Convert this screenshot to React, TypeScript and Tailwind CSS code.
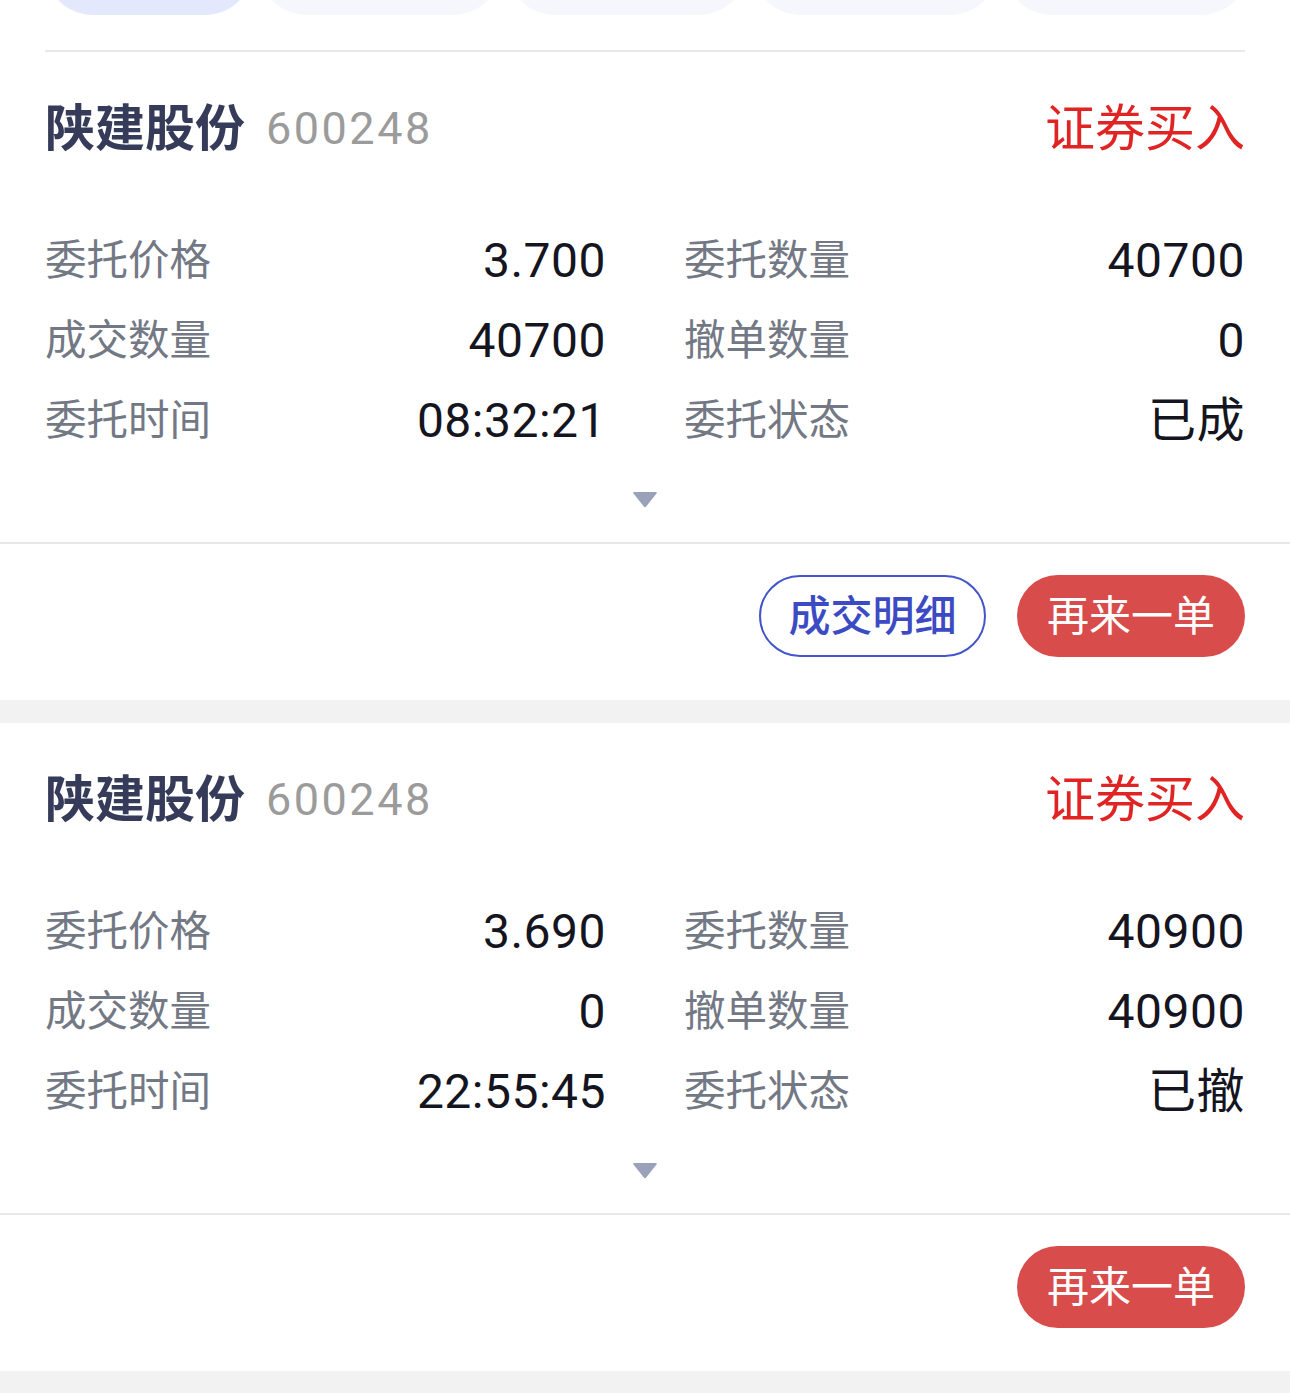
import React from "react";

interface IOrder {
  name: string;
  code: string;
  side: string;
  price: string;
  amount: string;
  filled: string;
  canceled: string;
  time: string;
  status: string;
  showDetail: boolean;
}

const orders: IOrder[] = [
  {
    name: "陕建股份",
    code: "600248",
    side: "证券买入",
    price: "3.700",
    amount: "40700",
    filled: "40700",
    canceled: "0",
    time: "08:32:21",
    status: "已成",
    showDetail: true,
  },
  {
    name: "陕建股份",
    code: "600248",
    side: "证券买入",
    price: "3.690",
    amount: "40900",
    filled: "0",
    canceled: "40900",
    time: "22:55:45",
    status: "已撤",
    showDetail: false,
  },
];

const Cell = ({ label, value }: { label: string; value: string }) => {
  return (
    <div className="flex h-[80px] items-center justify-between">
      <span className="text-[41.5px] text-[#737885]">{label}</span>
      <span className="text-[48px] tracking-[0.5px] text-[#15151f]">
        {value}
      </span>
    </div>
  );
};

const OrderCard = ({ order }: { order: IOrder }) => {
  return (
    <div className="bg-white">
      <div className="px-[45px]">
        <div className="flex h-[154px] items-center justify-between">
          <div className="flex items-center">
            <h1 className="text-[50px] font-semibold text-[#353b58]">
              {order.name}
            </h1>
            <span className="ml-[21px] text-[45px] tracking-[2.5px] text-[#9b9b9b]">
              {order.code}
            </span>
          </div>
          <span className="text-[50px] text-[#e02323]">{order.side}</span>
        </div>
        <div className="grid grid-cols-2 gap-x-[78px] pt-[15px]">
          <Cell label="委托价格" value={order.price} />
          <Cell label="委托数量" value={order.amount} />
          <Cell label="成交数量" value={order.filled} />
          <Cell label="撤单数量" value={order.canceled} />
          <Cell label="委托时间" value={order.time} />
          <Cell label="委托状态" value={order.status} />
        </div>
        <div className="flex h-[81px] justify-center pt-[30px]">
          <svg width="26" height="17" viewBox="0 0 26 17">
            <path
              d="M2 1 H24 Q25.5 1 24.5 2.5 L14.2 15.5 Q13 17 11.8 15.5 L1.5 2.5 Q0.5 1 2 1 Z"
              fill="#9aa2b9"
            />
          </svg>
        </div>
      </div>
      <div className="h-[2px] bg-[#e8e8e8]"></div>
      <div className="flex justify-end gap-[31px] px-[45px] pt-[31px] pb-[43px]">
        {order.showDetail && (
          <button className="flex h-[82px] w-[227px] items-center justify-center rounded-full border-2 border-[#4455c9] text-[42px] font-medium text-[#3c4bc3]">
            成交明细
          </button>
        )}
        <button className="flex h-[82px] w-[228px] items-center justify-center rounded-full bg-[#d94c4c] text-[42px] text-white">
          再来一单
        </button>
      </div>
    </div>
  );
};

const tabs = [
  { w: "w-[208px]", active: true },
  { w: "w-[242px]", active: false },
  { w: "w-[240px]", active: false },
  { w: "w-[245px]", active: false },
  { w: "w-[245px]", active: false },
];

const App = () => {
  return (
    <div className="min-h-screen w-[1290px] bg-[#f2f2f2] font-['Roboto','Noto_Sans_CJK_SC',sans-serif]">
      <div className="bg-white">
        <div className="flex h-[50px] gap-[6px] overflow-hidden px-[45px]">
          {tabs.map((t, i) => (
            <div
              key={i}
              className={`${t.w} -mt-[85px] h-[100px] shrink-0 rounded-[48px] ${
                t.active ? "bg-[#e3e8fd]" : "bg-[#f6f7fc]"
              }`}
            ></div>
          ))}
        </div>
        <div className="mx-[45px] h-[2px] bg-[#e8e8e8]"></div>
      </div>
      <div className="flex flex-col gap-[23px]">
        {orders.map((o, i) => (
          <OrderCard key={i} order={o} />
        ))}
      </div>
    </div>
  );
};

export default App;
